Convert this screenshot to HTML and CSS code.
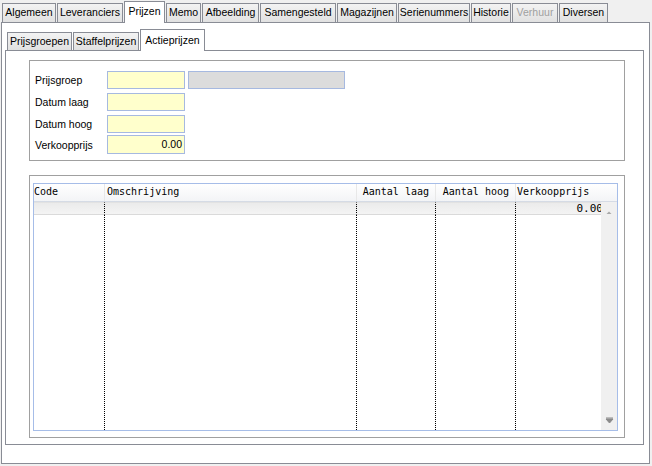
FILE: index.html
```html
<!DOCTYPE html>
<html>
<head>
<meta charset="utf-8">
<link rel="stylesheet" href="styles.css">
</head>
<body>
<div class="tabs">
  <div class="tab t-alg">Algemeen</div>
  <div class="tab t-lev">Leveranciers</div>
  <div class="tab t-prij active">Prijzen</div>
  <div class="tab t-memo">Memo</div>
  <div class="tab t-afb">Afbeelding</div>
  <div class="tab t-sam">Samengesteld</div>
  <div class="tab t-mag">Magazijnen</div>
  <div class="tab t-ser">Serienummers</div>
  <div class="tab t-his">Historie</div>
  <div class="tab t-ver disabled">Verhuur</div>
  <div class="tab t-div">Diversen</div>
</div>
<div class="panel">
  <div class="subtabs">
    <div class="subtab s-grp">Prijsgroepen</div>
    <div class="subtab s-staf">Staffelprijzen</div>
    <div class="subtab s-act active">Actieprijzen</div>
  </div>
  <div class="subpanel">
    <div class="group form">
      <div class="frow">
        <span class="label">Prijsgroep</span>
        <span class="input"></span>
        <span class="input wide ro"></span>
      </div>
      <div class="frow">
        <span class="label">Datum laag</span>
        <span class="input"></span>
      </div>
      <div class="frow">
        <span class="label">Datum hoog</span>
        <span class="input"></span>
      </div>
      <div class="frow last">
        <span class="label">Verkoopprijs</span>
        <span class="input num">0.00</span>
      </div>
    </div>
    <div class="group listbox">
      <div class="list">
        <div class="lhead">
          <div class="hc c-code">Code</div>
          <div class="hc c-oms">Omschrijving</div>
          <div class="hc c-al right">Aantal laag</div>
          <div class="hc c-ah right">Aantal hoog</div>
          <div class="hc c-vk">Verkoopprijs</div>
        </div>
        <div class="lbody">
          <div class="rows">
            <div class="cell sel"></div>
            <div class="cell sel"></div>
            <div class="cell sel"></div>
            <div class="cell sel"></div>
            <div class="cell sel num last">0.00</div>
            <div class="cell fill"></div>
            <div class="cell fill"></div>
            <div class="cell fill"></div>
            <div class="cell fill"></div>
            <div class="cell fill last"></div>
          </div>
          <div class="scrollbar">
            <svg class="arrow" width="16" height="16" viewBox="0 0 16 16"><path d="M5.5 9 L10.5 9 L8 6.5 Z" fill="#a8a8a8"/></svg>
            <svg class="arrow" width="16" height="16" viewBox="0 0 16 16"><path d="M5 6 L12 6 M5 7 L12 7 L8.5 11 Z" fill="#8a8a8a" stroke="#8a8a8a" stroke-width="1"/></svg>
          </div>
        </div>
      </div>
    </div>
  </div>
</div>
</body>
</html>
```

FILE: styles.css
```css
* { box-sizing: border-box; }
html, body { margin: 0; padding: 0; }
body {
  width: 652px;
  height: 466px;
  background: #f0f0f0;
  font-family: "Liberation Sans", Arial, sans-serif;
  font-size: 10.5px;
  color: #000;
  overflow: hidden;
}

/* top tab strip */
.tabs {
  display: flex;
  align-items: flex-end;
  height: 22px;
  padding-left: 2px;
}
.tab {
  height: 19px;
  margin-right: 1px;
  border: 1px solid #898c95;
  border-bottom: none;
  background: linear-gradient(#f3f3f3, #e1e1e1);
  text-align: center;
  line-height: 17px;
  white-space: nowrap;
}
.tab.active {
  height: 22px;
  margin-bottom: -1px;
  background: #fff;
  position: relative;
  z-index: 2;
  line-height: 19px;
}
.tab.disabled { color: #a0a0a0; }
.t-alg { width: 54px; }
.t-lev { width: 66px; }
.t-prij { width: 41px; }
.t-memo { width: 35px; }
.t-afb { width: 57px; }
.t-sam { width: 76px; }
.t-mag { width: 60px; }
.t-ser { width: 72px; }
.t-his { width: 40px; }
.t-ver { width: 46px; }
.t-div { width: 49px; }

.panel {
  margin-left: 1px;
  width: 649px;
  height: 442px;
  border: 1px solid #898c95;
  background: #fff;
  padding: 6px 0 0 3px;
}

/* inner tab strip */
.subtabs {
  display: flex;
  align-items: flex-end;
  height: 21px;
  padding-left: 2px;
}
.subtab {
  height: 18px;
  margin-right: 1px;
  border: 1px solid #898c95;
  border-bottom: none;
  background: linear-gradient(#f3f3f3, #e1e1e1);
  text-align: center;
  line-height: 16px;
  white-space: nowrap;
}
.subtab.active {
  height: 22px;
  margin-bottom: -1px;
  background: #fff;
  position: relative;
  z-index: 2;
  line-height: 20px;
}
.s-grp { width: 65px; }
.s-staf { width: 66px; }
.s-act { width: 65px; }

.subpanel {
  width: 639px;
  height: 395px;
  border: 1px solid #898c95;
  padding: 9px 0 0 23px;
}

.group {
  width: 596px;
  border: 1px solid #a0a0a0;
}

/* form */
.form {
  height: 101px;
  padding: 10px 0 0 5px;
}
.frow {
  display: flex;
  align-items: center;
  height: 18px;
  margin-bottom: 4px;
}
.frow.last { margin-top: -2px; height: 19px; }
.label { width: 72px; }
.input {
  width: 78px;
  height: 100%;
  border: 1px solid #a6b9e0;
  background: #ffffcc;
  line-height: 16px;
}
.input.wide {
  width: 157px;
  margin-left: 3px;
}
.input.ro { background: #dcdcdc; }
.input.num { text-align: right; padding-right: 2px; }

/* list */
.listbox {
  margin-top: 14px;
  height: 263px;
  padding: 7px 0 0 3px;
}
.list {
  width: 585px;
  height: 248px;
  border: 1px solid #a6bde8;
  display: flex;
  flex-direction: column;
  font-family: "DejaVu Sans Mono", "Liberation Mono", monospace;
  font-size: 10px;
}
.lhead {
  display: flex;
  height: 18px;
  border-bottom: 1px solid #d5dbe5;
  background: linear-gradient(#ffffff, #f3f4f6);
}
.hc {
  border-right: 1px solid #e8e8e8;
  line-height: 15px;
  white-space: nowrap;
  overflow: hidden;
}
.c-code { width: 71px; padding-left: 0; }
.c-oms { width: 252px; padding-left: 2px; }
.c-al { width: 79px; }
.c-ah { width: 80px; }
.c-vk { width: 92px; padding-left: 1px; border-right: none; }
.hc.right { text-align: right; padding-right: 6px; }

.lbody {
  flex: 1;
  display: flex;
  min-height: 0;
}
.rows {
  width: 567px;
  overflow: hidden;
  display: grid;
  grid-template-columns: 71px 252px 79px 80px 92px;
  grid-template-rows: 13px 1fr;
}
.cell {
  border-right: 1px dotted #000;
  white-space: nowrap;
}
.cell.last { border-right: none; }
.cell.sel {
  background: linear-gradient(#ebebeb, #f4f4f4);
  border-top: 1px solid #e2e2e2;
  border-bottom: 1px solid #dadada;
  line-height: 11px;
  font-size: 11px;
}
.cell.num { text-align: right; padding-right: 5px; }

.scrollbar {
  width: 16px;
  background: #f0f0f0;
  display: flex;
  flex-direction: column;
  justify-content: space-between;
  padding: 3px 0 2px;
}
.arrow { display: block; }
```
